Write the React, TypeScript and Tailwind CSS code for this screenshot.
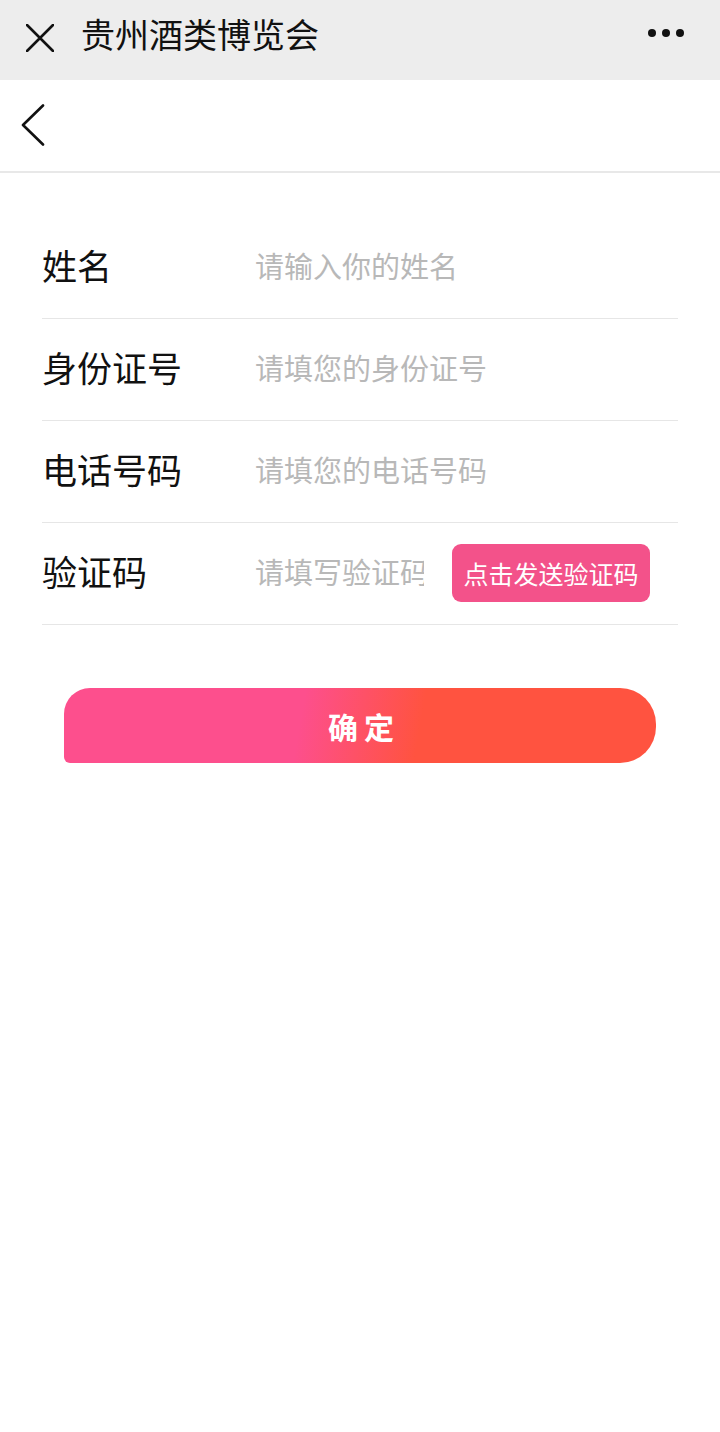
import React from 'react';

const FONT = { fontFamily: '"Noto Sans CJK SC", "Noto Sans", sans-serif' };

function FormRow({
  label,
  placeholder,
  children,
}: {
  label: string;
  placeholder: string;
  children?: React.ReactNode;
}) {
  return (
    <div className="flex items-center h-[102px] pb-[6px] border-b-[1.5px] border-[#e6e6e6]">
      <div className="w-[213px] shrink-0 text-[35px] text-[#111] leading-none">{label}</div>
      <input
        type="text"
        placeholder={placeholder}
        className={
          children
            ? 'w-[169px] shrink-0 bg-transparent outline-none text-[29px] leading-none text-[#333] placeholder:text-[#b8b8b8]'
            : 'flex-1 min-w-0 bg-transparent outline-none text-[29px] leading-none text-[#333] placeholder:text-[#b8b8b8]'
        }
        style={FONT}
      />
      {children}
    </div>
  );
}

export default function App() {
  return (
    <div className="w-[720px] min-h-[1432px] bg-white" style={FONT}>
      {/* wechat top bar */}
      <div className="h-[80px] bg-[#ededed] flex items-center pl-[26px] pr-[36px]">
        <svg width="28" height="28" viewBox="0 0 28 28" className="shrink-0 -mt-[4px]">
          <path d="M1 1 L27 27 M27 1 L1 27" stroke="#111" strokeWidth="2.6" strokeLinecap="round" />
        </svg>
        <div className="ml-[27px] text-[34px] text-[#111] leading-none -mt-[12px]">贵州酒类博览会</div>
        <div className="ml-auto flex items-center gap-[6px] -mt-[14px]">
          <span className="w-[8px] h-[8px] rounded-full bg-[#111]" />
          <span className="w-[8px] h-[8px] rounded-full bg-[#111]" />
          <span className="w-[8px] h-[8px] rounded-full bg-[#111]" />
        </div>
      </div>

      {/* page nav */}
      <div className="h-[93px] flex items-center pl-[21px] border-b-2 border-[#e8e8e8]">
        <svg width="24" height="42" viewBox="0 0 24 42" className="-mt-[2px]">
          <path d="M22 1.5 L2 21 L22 40.5" fill="none" stroke="#111" strokeWidth="2.6" strokeLinecap="round" strokeLinejoin="round" />
        </svg>
      </div>

      {/* form */}
      <div className="mx-[42px] mt-[44px]">
        <FormRow label="姓名" placeholder="请输入你的姓名" />
        <FormRow label="身份证号" placeholder="请填您的身份证号" />
        <FormRow label="电话号码" placeholder="请填您的电话号码" />
        <FormRow label="验证码" placeholder="请填写验证码">
          <button
            type="button"
            className="ml-[28px] mt-[5px] w-[198px] h-[58px] rounded-[9px] bg-[#f3528a] text-white text-[25px] leading-none flex items-center justify-center"
            style={FONT}
          >
            点击发送验证码
          </button>
        </FormRow>
      </div>

      <button
        type="button"
        className="ml-[64px] mt-[63px] w-[592px] h-[75px] pl-[8px] rounded-tl-[26px] rounded-bl-[6px] rounded-r-[36px] bg-[linear-gradient(100deg,#fd4f8d_0%,#fd4f8d_40%,#ff5340_60%,#ff5340_100%)] text-white text-[30px] font-semibold tracking-[6px] leading-none flex items-center justify-center"
        style={FONT}
      >
        确定
      </button>
    </div>
  );
}
